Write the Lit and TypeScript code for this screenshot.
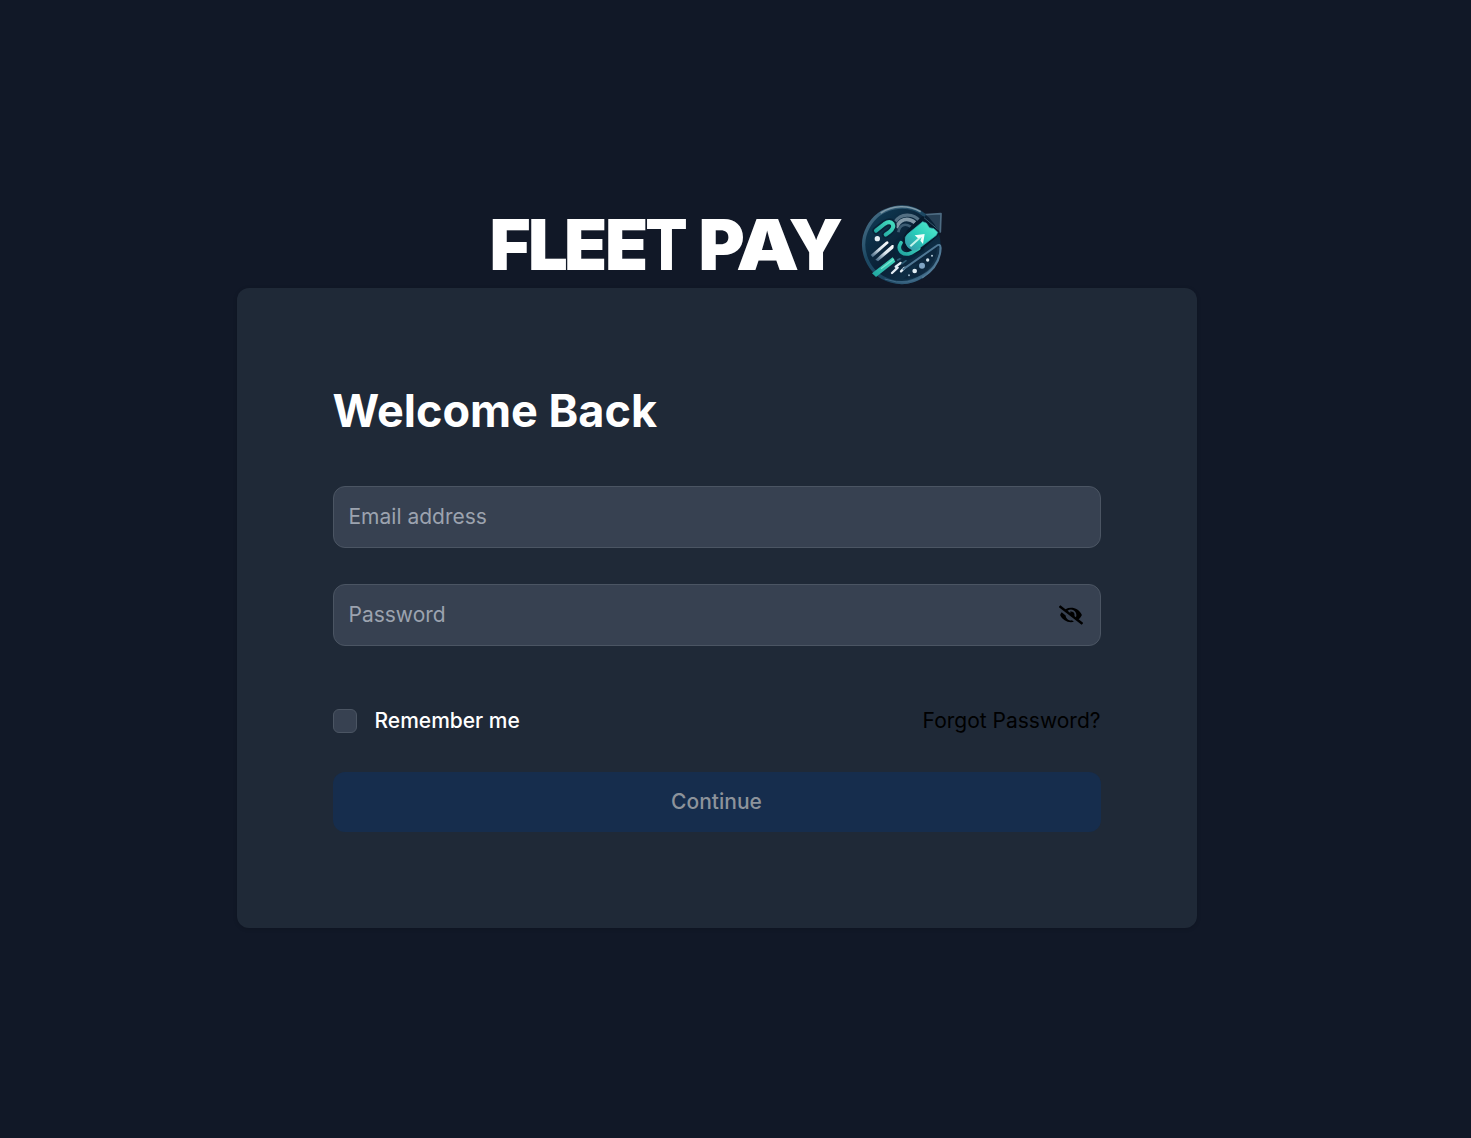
import { LitElement, html, css, svg } from "lit";
import { customElement } from "lit/decorators.js";

const emblem = svg`
  <defs>
    <linearGradient id="disc" x1="0" y1="0" x2="1" y2="1">
      <stop offset="0" stop-color="#10415c" /><stop offset=".5" stop-color="#0a2035" /><stop offset="1" stop-color="#123e59" />
    </linearGradient>
    <linearGradient id="rim" x1="0" y1="0" x2="1" y2="1">
      <stop offset="0" stop-color="#54788f" /><stop offset=".35" stop-color="#1d4964" /><stop offset=".65" stop-color="#1c4560" /><stop offset="1" stop-color="#55809e" />
    </linearGradient>
    <linearGradient id="mint" x1="0" y1="1" x2="1" y2="0">
      <stop offset="0" stop-color="#1fa39f" /><stop offset="1" stop-color="#45dcbf" />
    </linearGradient>
    <linearGradient id="screen" x1="0" y1="1" x2="1" y2="0">
      <stop offset="0" stop-color="#3a8fa6" /><stop offset=".45" stop-color="#28cbb9" /><stop offset="1" stop-color="#59edcf" />
    </linearGradient>
    <linearGradient id="fade" x1="1" y1="0" x2="0" y2="1">
      <stop offset="0" stop-color="#ffffff" /><stop offset=".5" stop-color="#dbe5ed" /><stop offset="1" stop-color="#365b78" />
    </linearGradient>
  </defs>
  <path d="M208 60 L273 56 L271 111 L250 94Z" fill="#263f55" stroke="#4d6b82" stroke-width="5" stroke-linejoin="round" />
  <circle cx="155" cy="151" r="117" fill="url(#disc)" />
  <path d="M226 62 A113 113 0 1 0 267 158" fill="none" stroke="url(#rim)" stroke-width="10" />
  <path d="M92 54 A116 116 0 0 1 212 50" fill="none" stroke="#7f99a8" stroke-width="5" />
  <path d="M136 80 C151 55 190 53 209 78" fill="none" stroke="#536f83" stroke-width="10" />
  <path d="M139 99 C148 72 173 65 195 83" fill="none" stroke="#8399a8" stroke-width="11" />
  <path d="M145 112 C149 89 165 84 182 95" fill="none" stroke="#3c5b72" stroke-width="8" />
  <path d="M78 107 L103 87 Q120 76 128 87 Q134 98 118 111 L107 119" fill="none" stroke="#092338" stroke-width="22" stroke-linecap="round" />
  <path d="M78 107 L103 87 Q120 76 128 87 Q134 98 118 111 L107 119" fill="none" stroke="url(#mint)" stroke-width="12" stroke-linecap="round" />
  <circle cx="82" cy="131" r="8" fill="#e6eff4" />
  <path d="M62 180 L108 140 Q115 137 116 144 L68 187Z" fill="url(#fade)" />
  <path d="M76 194 L126 150 Q134 148 134 157 L84 199Z" fill="url(#fade)" />
  <path d="M66 235 L128 187 L136 200 L78 246Z" fill="url(#mint)" />
  <path d="M93 221 L132 192" stroke="#7be2cf" stroke-width="4" />
  <path d="M137 215 L152 204 M126 234 L143 218 M153 229 L164 218" stroke="#e4edf4" stroke-width="7" stroke-linecap="round" />
  <path d="M143 195 L156 188 M156 206 L168 197" stroke="#2e5d75" stroke-width="5" stroke-linecap="round" />
  <path d="M152 138 Q138 153 145 168 Q158 188 181 179 L211 161" fill="none" stroke="#07243a" stroke-width="24" stroke-linecap="round" />
  <path d="M172 105 L214 66 Q222 62 230 71 L266 103 Q272 111 264 122 L208 171 Q186 184 166 166 Q150 148 162 122Z" fill="#061a2c" />
  <path d="M153 143 Q143 158 152 169 Q163 182 183 174 L206 160" fill="none" stroke="url(#mint)" stroke-width="11" stroke-linecap="round" />
  <path d="M172 118 L218 80 L229 84 L238 98 L252 101 L263 112 L259 121 L201 165 Q188 169 174 157 Q163 145 166 127Z" fill="url(#screen)" stroke="#39aeb4" stroke-width="2" />
  <path d="M222 68 L266 105" stroke="#395a71" stroke-width="3" />
  <path d="M181 154 L212 126" stroke="#c2f4ea" stroke-width="6" />
  <path d="M194 121 L224 117 L219 147 L211 137 L215 127 L204 130Z" fill="#f1fffb" />
  <path d="M158 216 L264 151 Q277 171 251 210 Q219 251 160 251 Q188 229 209 205Z" fill="#0c263c" opacity=".8" />
  <path d="M158 224 L259 153 Q271 144 272 159 Q270 215 216 248" fill="none" stroke="#4f7895" stroke-width="6" />
  <path d="M104 252 Q176 278 230 235" fill="none" stroke="#416c8a" stroke-width="3" />
  <circle cx="194" cy="228" r="7" fill="#e1edf4" />
  <circle cx="216" cy="212" r="9" fill="#7fa4c4" />
  <circle cx="233" cy="195" r="5" fill="#d7e5ee" />
  <circle cx="246" cy="182" r="3" fill="#b9cfdd" />
  <circle cx="177" cy="241" r="3" fill="#95b1c5" />
`;

@customElement("app-root")
export class AppRoot extends LitElement {
  static styles = css`
    :host { display: block; font-family: Inter, "Liberation Sans", sans-serif; }
    * { box-sizing: border-box; }
    .page {
      height: 1138px; background: #111827; padding: 200px 37px 0 0;
      display: flex; flex-direction: column; align-items: center; overflow: hidden;
    }
    .brand { width: 456px; height: 88px; display: flex; flex: none; }
    .wordmark {
      display: flex; width: 371px; height: 88px; flex: none; padding: 1px 0 0 0.5px;
      color: #fff; font-size: 70.5px; line-height: 87px; font-weight: 900; white-space: nowrap;
    }
    .wordmark span { flex: none; transform-origin: 0 50%; }
    .l-f { width: 38.5px; }
    .l-l { width: 36px; }
    .l-e1 { width: 41px; }
    .l-e2 { width: 39.5px; }
    .l-t { width: 54px; font-weight: 800; transform: scaleX(.9); }
    .l-p { width: 37.5px; }
    .l-a { width: 52.5px; transform: scaleX(1.13); }
    .l-y { width: 60px; }
    .emblem { width: 84px; height: 84px; margin-top: 2px; flex: none; }
    .card {
      width: 960px; height: 640px; flex: none; padding: 96px; border-radius: 12px;
      background: #1f2937; box-shadow: 0 1px 4px rgba(0,0,0,.16);
    }
    h1 { margin: 0 0 48px -0.5px; color: #fff; font-size: 45px; line-height: 54px; font-weight: 700; }
    .field {
      height: 62px; display: flex; align-items: center; justify-content: space-between;
      border: 1px solid #4b5563; border-radius: 12px; background: #374151; padding: 0 17px 0 14.5px; margin-bottom: 36px;
    }
    input[type="text"], input[type="password"] {
      border: 0; outline: 0; padding: 0; background: transparent; color: #fff; font: 400 21px/30px Inter, sans-serif; width: 600px; height: 30px;
    }
    input::placeholder { color: #9ca3af; opacity: 1; }
    .eye { width: 24px; height: 24px; fill: #000; }
    .options { display: flex; align-items: center; height: 30px; margin-top: 60px; color: #fff; font-size: 21px; line-height: 30px; }
    .check { appearance: none; width: 24px; height: 24px; margin: 0 17.5px 0 0; border: 1px solid #4b5563; border-radius: 6px; background: #374151; }
    .remember { display: flex; align-items: center; font-weight: 500; }
    .forgot { margin: 0 0.5px 0 auto; color: #000; text-decoration: none; }
    .submit {
      display: block; width: 768px; height: 60px; border: 0; padding: 0 1px 0 0; margin-top: 36px; border-radius: 12px;
      background: #162d4d; color: #8d939b; font: 500 21px/30px Inter, sans-serif;
    }
  `;

  render() {
    return html`
      <main class="page">
        <div class="brand">
          <div class="wordmark"><span class="l-f">F</span><span class="l-l">L</span><span class="l-e1">E</span><span class="l-e2">E</span><span class="l-t">T</span> <span class="l-p">P</span><span class="l-a">A</span><span class="l-y">Y</span></div>
          <svg class="emblem" viewBox="30 21 252 252">${emblem}</svg>
        </div>
        <section class="card">
          <h1>Welcome Back</h1>
          <div class="field"><input type="text" placeholder="Email address" /></div>
          <div class="field">
            <input type="password" placeholder="Password" />
            <svg class="eye" viewBox="0 0 640 512">
              <path d="M320 400c-75.85 0-137.25-58.71-142.9-133.11L72.2 185.82c-13.79 17.3-26.48 35.59-36.72 55.59a32.35 32.35 0 0 0 0 29.19C89.71 376.41 197.07 448 320 448c26.91 0 52.87-4 77.89-10.46L346 397.39a144.13 144.13 0 0 1-26 2.61zm313.82 58.1l-110.55-85.44a331.25 331.25 0 0 0 81.25-102.07 32.35 32.35 0 0 0 0-29.19C550.29 135.59 442.93 64 320 64a308.15 308.15 0 0 0-147.32 37.7L45.46 3.37A16 16 0 0 0 23 6.18L3.37 31.45A16 16 0 0 0 6.18 53.9l588.36 454.73a16 16 0 0 0 22.46-2.81l19.64-25.27a16 16 0 0 0-2.82-22.45zm-183.72-142l-39.3-30.38A94.75 94.75 0 0 0 416 256a94.76 94.76 0 0 0-121.31-92.21A47.65 47.65 0 0 1 304 192a46.64 46.64 0 0 1-1.54 10l-73.61-56.89A142.31 142.31 0 0 1 320 112a143.92 143.92 0 0 1 144 144c0 21.63-5.29 41.79-13.9 60.11z" />
            </svg>
          </div>
          <div class="options">
            <label class="remember"><input class="check" type="checkbox" />Remember me</label>
            <a class="forgot">Forgot Password?</a>
          </div>
          <button class="submit" disabled>Continue</button>
        </section>
      </main>`;
  }
}
